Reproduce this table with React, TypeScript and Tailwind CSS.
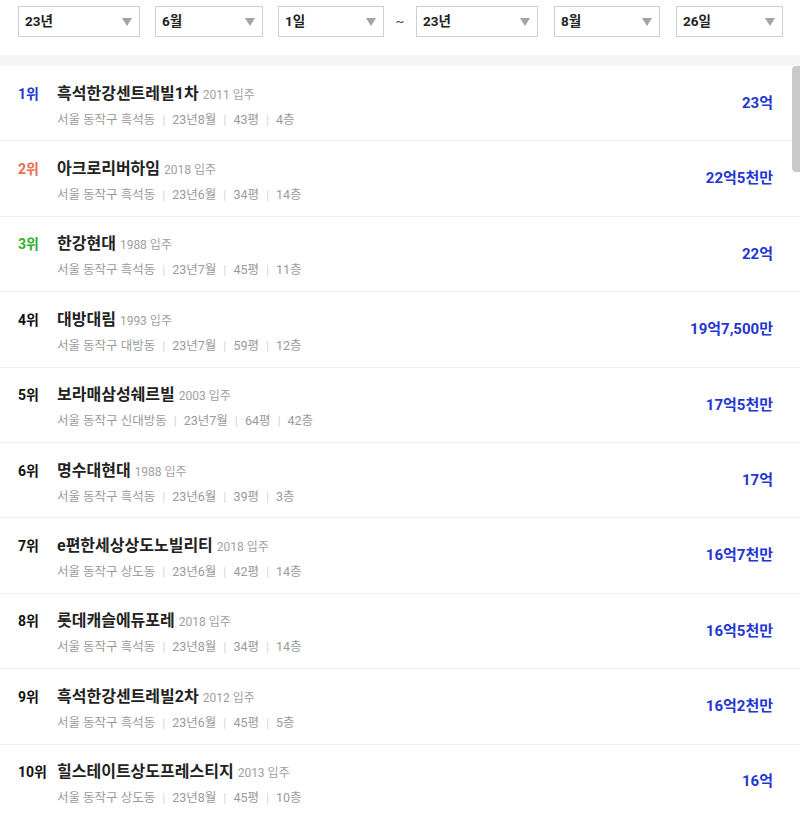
import React from "react";

type Deal = {
  rank: number;
  name: string;
  year: number;
  addr: string;
  month: string;
  size: string;
  floor: string;
  price: string;
};

const deals: Deal[] = [
  { rank: 1, name: "흑석한강센트레빌1차", year: 2011, addr: "서울 동작구 흑석동", month: "23년8월", size: "43평", floor: "4층", price: "23억" },
  { rank: 2, name: "아크로리버하임", year: 2018, addr: "서울 동작구 흑석동", month: "23년6월", size: "34평", floor: "14층", price: "22억5천만" },
  { rank: 3, name: "한강현대", year: 1988, addr: "서울 동작구 흑석동", month: "23년7월", size: "45평", floor: "11층", price: "22억" },
  { rank: 4, name: "대방대림", year: 1993, addr: "서울 동작구 대방동", month: "23년7월", size: "59평", floor: "12층", price: "19억7,500만" },
  { rank: 5, name: "보라매삼성쉐르빌", year: 2003, addr: "서울 동작구 신대방동", month: "23년7월", size: "64평", floor: "42층", price: "17억5천만" },
  { rank: 6, name: "명수대현대", year: 1988, addr: "서울 동작구 흑석동", month: "23년6월", size: "39평", floor: "3층", price: "17억" },
  { rank: 7, name: "e편한세상상도노빌리티", year: 2018, addr: "서울 동작구 상도동", month: "23년6월", size: "42평", floor: "14층", price: "16억7천만" },
  { rank: 8, name: "롯데캐슬에듀포레", year: 2018, addr: "서울 동작구 흑석동", month: "23년8월", size: "34평", floor: "14층", price: "16억5천만" },
  { rank: 9, name: "흑석한강센트레빌2차", year: 2012, addr: "서울 동작구 흑석동", month: "23년6월", size: "45평", floor: "5층", price: "16억2천만" },
  { rank: 10, name: "힐스테이트상도프레스티지", year: 2013, addr: "서울 동작구 상도동", month: "23년8월", size: "45평", floor: "10층", price: "16억" },
];

const rankColor = (rank: number) => {
  if (rank === 1) return "text-[#2336d2]";
  if (rank === 2) return "text-[#ec6a4e]";
  if (rank === 3) return "text-[#2eb02e]";
  return "text-[#111111]";
};

const Select = ({ value, width }: { value: string; width: string }) => (
  <div
    className={`${width} h-[31px] border border-[#cfcfcf] bg-white flex items-center justify-between pl-[6px] pr-[7px]`}
  >
    <span className="text-[13.5px] font-bold text-[#222222]">{value}</span>
    <svg width="10" height="8" viewBox="0 0 10 8">
      <path d="M0 0 H10 L5 8 Z" fill="#a3a3a3" />
    </svg>
  </div>
);

const Sep = () => <span className="mx-[7px] text-[#d6d6d6]">|</span>;

export default function App() {
  return (
    <div
      className="relative w-[800px] h-[817px] overflow-hidden bg-white"
      style={{ fontFamily: "Roboto, 'Noto Sans CJK KR', sans-serif" }}
    >
      {/* date filter */}
      <div className="flex items-start pl-[18px] pt-[6px] h-[55px]">
        <Select value="23년" width="w-[122px]" />
        <div className="ml-[15px]">
          <Select value="6월" width="w-[108px]" />
        </div>
        <div className="ml-[15px]">
          <Select value="1일" width="w-[106px]" />
        </div>
        <div className="w-[32px] h-[31px] flex items-center justify-center text-[13px] text-[#444444]">
          ~
        </div>
        <Select value="23년" width="w-[122px]" />
        <div className="ml-[16px]">
          <Select value="8월" width="w-[106px]" />
        </div>
        <div className="ml-[16px]">
          <Select value="26일" width="w-[107px]" />
        </div>
      </div>
      <div className="h-[11px] bg-[#f5f5f5]" />

      {/* ranking list */}
      <div>
        {deals.map((d) => (
          <div
            key={d.rank}
            className="h-[75.4px] border-b border-[#f1f1f1] flex items-center pl-[18px] pr-[27px]"
          >
            <div className="flex-1 pt-[5px]">
              <div className="flex items-baseline leading-[20px]">
                <span className={`w-[39px] text-[14px] font-bold ${rankColor(d.rank)}`}>
                  {d.rank}위
                </span>
                <span className="text-[16px] font-bold text-[#222222]">{d.name}</span>
                <span className="ml-[4px] text-[12px] text-[#a0a0a0]">{d.year} 입주</span>
              </div>
              <div className="mt-[6px] pl-[39px] text-[12.5px] leading-[17px] text-[#9a9a9a]">
                {d.addr}
                <Sep />
                {d.month}
                <Sep />
                {d.size}
                <Sep />
                {d.floor}
              </div>
            </div>
            <div className="text-[15px] font-bold text-[#2336d2]">{d.price}</div>
          </div>
        ))}
      </div>

      {/* scrollbar thumb */}
      <div className="absolute right-0 top-[66px] w-[8px] h-[106px] rounded-l-[4px] bg-[#c9c9c9]" />
    </div>
  );
}
